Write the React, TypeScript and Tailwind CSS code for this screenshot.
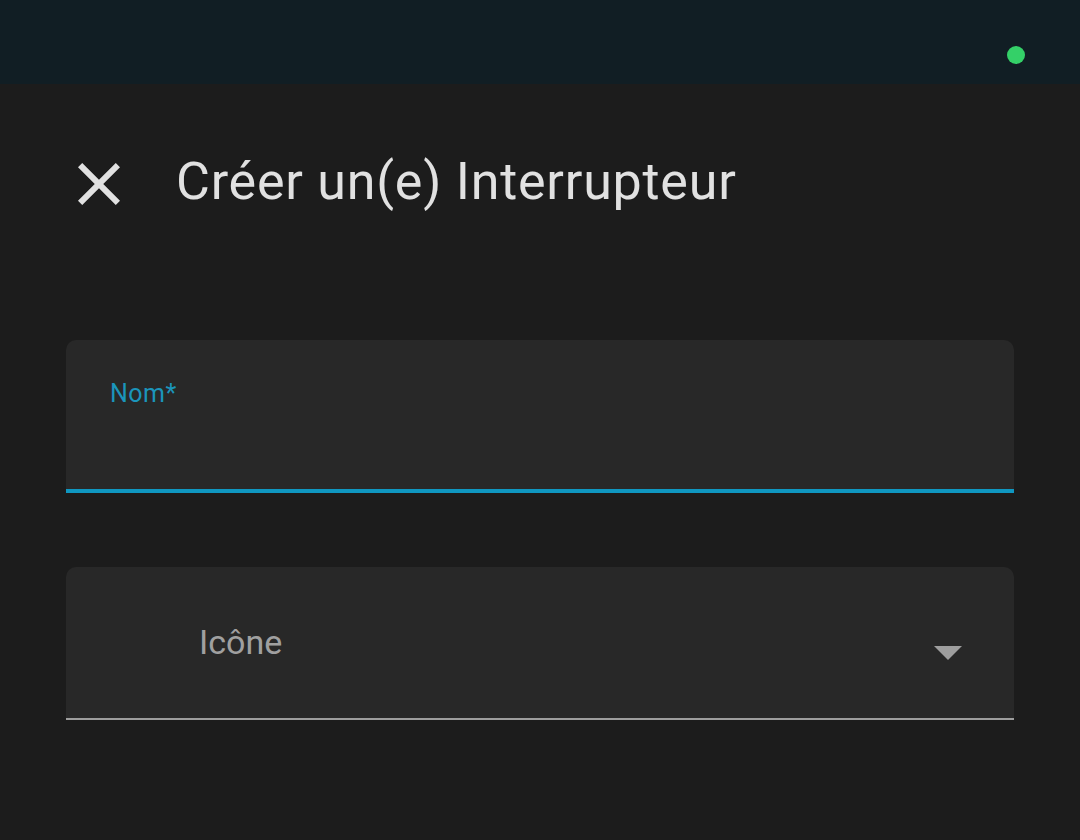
import React from 'react';

function CloseIcon() {
  return (
    <svg width="72" height="72" viewBox="0 0 24 24" className="-ml-[3px] shrink-0" fill="#e1e1e1">
      <path d="M19 6.41L17.59 5 12 10.59 6.41 5 5 6.41 10.59 12 5 17.59 6.41 19 12 13.41 17.59 19 19 17.59 13.41 12z" />
    </svg>
  );
}

export default function App() {
  return (
    <div className="w-[1080px] h-[840px] bg-[#1c1c1c] overflow-hidden" style={{ fontFamily: 'Roboto, "Liberation Sans", sans-serif' }}>
      <div className="h-[84px] bg-[#111e24] flex items-start justify-end pr-[55px] pt-[46px]">
        <span className="block w-[18px] h-[18px] rounded-full bg-[#34d068]" />
      </div>

      <div className="px-[66px]">
        <div className="mt-[64px] h-[72px] flex items-center gap-[41px]">
          <CloseIcon />
          <h1 className="text-[52px] leading-[52px] font-normal tracking-[0.015em] text-[#e1e1e1] mt-[-4px]">Créer un(e) Interrupteur</h1>
        </div>

        <div className="mt-[120px] h-[153px] bg-[#282828] rounded-t-[10px] border-b-4 border-[#0f97c1] pl-[44px] pt-[41px]">
          <label className="block text-[25px] leading-[25px] tracking-[0.02em] text-[#1b95bb]">Nom*</label>
        </div>

        <div className="mt-[74px] h-[153px] bg-[#282828] rounded-t-[10px] border-b-2 border-[#9e9e9e] flex items-start pl-[133px] pr-[52px]">
          <span className="mt-[58px] text-[34px] leading-[34px] text-[#a0a0a0]">Icône</span>
          <span className="flex-1" />
          <span className="mt-[79px] w-0 h-0 border-l-[14px] border-r-[14px] border-t-[14px] border-l-transparent border-r-transparent border-t-[#9e9e9e]" />
        </div>
      </div>
    </div>
  );
}
